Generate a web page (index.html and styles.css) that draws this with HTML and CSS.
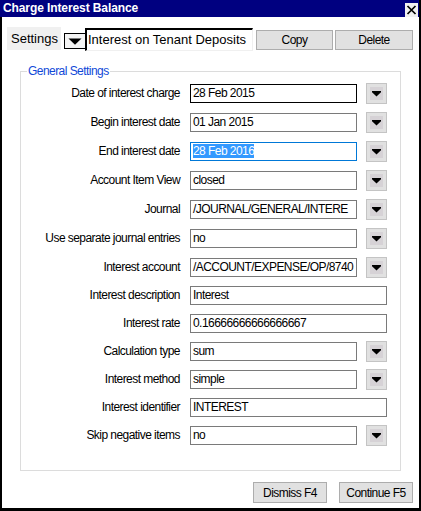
FILE: index.html
```html
<!DOCTYPE html>
<html>
<head>
<meta charset="utf-8">
<link rel="stylesheet" href="styles.css">
</head>
<body>
<div class="window">
  <div class="titlebar">
    <span class="title">Charge Interest Balance</span>
    <span class="close"><svg width="13" height="14" viewBox="0 0 13 14"><path d="M2.5 3 L10.5 11 M10.5 3 L2.5 11" stroke="#000" stroke-width="1.7" fill="none"/></svg></span>
  </div>
  <div class="content">
    <div class="settings-row">
      <span class="settings-label">Settings</span>
      <span class="settings-drop"><svg width="14" height="7" viewBox="0 0 14 7"><path d="M0.5 0.5 H13.5 L7 6.8 Z" fill="#000"/></svg></span>
      <span class="settings-field">Interest on Tenant Deposits</span>
      <button class="btn btn-top">Copy</button>
      <button class="btn btn-top btn-delete">Delete</button>
    </div>

    <div class="group">
      <span class="legend">General Settings</span>
      <div class="rows">
        <span class="lbl">Date of interest charge</span>
        <span class="inp inp-dark">28 Feb 2015</span>
        <span class="dd"><svg width="21" height="21" viewBox="0 0 21 21"><use href="#ddicon"/></svg></span>

        <span class="lbl">Begin interest date</span>
        <span class="inp">01 Jan 2015</span>
        <span class="dd"><svg width="21" height="21" viewBox="0 0 21 21"><use href="#ddicon"/></svg></span>

        <span class="lbl">End interest date</span>
        <span class="inp inp-focus"><span class="sel">28 Feb 2016</span></span>
        <span class="dd"><svg width="21" height="21" viewBox="0 0 21 21"><use href="#ddicon"/></svg></span>

        <span class="lbl">Account Item View</span>
        <span class="inp">closed</span>
        <span class="dd"><svg width="21" height="21" viewBox="0 0 21 21"><use href="#ddicon"/></svg></span>

        <span class="lbl">Journal</span>
        <span class="inp">/JOURNAL/GENERAL/INTERE</span>
        <span class="dd"><svg width="21" height="21" viewBox="0 0 21 21"><use href="#ddicon"/></svg></span>

        <span class="lbl">Use separate journal entries</span>
        <span class="inp">no</span>
        <span class="dd"><svg width="21" height="21" viewBox="0 0 21 21"><use href="#ddicon"/></svg></span>

        <span class="lbl">Interest account</span>
        <span class="inp">/ACCOUNT/EXPENSE/OP/8740</span>
        <span class="dd"><svg width="21" height="21" viewBox="0 0 21 21"><use href="#ddicon"/></svg></span>

        <span class="lbl">Interest description</span>
        <span class="inp inp-wide">Interest</span>

        <span class="lbl">Interest rate</span>
        <span class="inp inp-wide">0.16666666666666667</span>

        <span class="lbl">Calculation type</span>
        <span class="inp">sum</span>
        <span class="dd"><svg width="21" height="21" viewBox="0 0 21 21"><use href="#ddicon"/></svg></span>

        <span class="lbl">Interest method</span>
        <span class="inp">simple</span>
        <span class="dd"><svg width="21" height="21" viewBox="0 0 21 21"><use href="#ddicon"/></svg></span>

        <span class="lbl">Interest identifier</span>
        <span class="inp inp-wide">INTEREST</span>

        <span class="lbl">Skip negative items</span>
        <span class="inp">no</span>
        <span class="dd"><svg width="21" height="21" viewBox="0 0 21 21"><use href="#ddicon"/></svg></span>
      </div>
    </div>

    <div class="footer">
      <button class="btn btn-foot">Dismiss F4</button>
      <button class="btn btn-foot">Continue F5</button>
    </div>
  </div>
</div>

<svg width="0" height="0" class="defs">
  <defs>
    <g id="ddicon">
      <rect x="0.5" y="0.5" width="20" height="20" fill="#e1e1e1" stroke="#c4c4c4"/>
      <rect x="4" y="4" width="13" height="13" fill="#d6d2d6"/>
      <path d="M6 8 H15 V9.2 L10.5 13.6 L6 9.2 Z" fill="#000"/>
    </g>
  </defs>
</svg>
</body>
</html>
```

FILE: styles.css
```css
html, body {
  margin: 0;
  padding: 0;
  background: #000;
}

body {
  width: 421px;
  height: 511px;
  overflow: hidden;
  font-family: "Liberation Sans", Arial, sans-serif;
}

.defs {
  position: absolute;
  width: 0;
  height: 0;
}

.window {
  width: 421px;
  height: 511px;
  display: flex;
  flex-direction: column;
  background: #000;
}

.titlebar {
  width: 419px;
  height: 17px;
  box-sizing: border-box;
  background: #000080;
  display: flex;
  align-items: flex-start;
  justify-content: space-between;
  padding-right: 1px;
}

.title {
  color: #fff;
  font-weight: bold;
  font-size: 12px;
  line-height: 17px;
  padding-left: 3px;
  letter-spacing: -0.1px;
}

.close {
  margin-top: 3px;
  width: 13px;
  height: 14px;
  background: #f0f0f0;
  display: flex;
}

.content {
  flex: 1;
  margin: 0 2px 3px 2px;
  background: #fff;
  display: flex;
  flex-direction: column;
}

.settings-row {
  display: flex;
  align-items: flex-start;
  padding: 10px 0 0 5px;
}

.settings-label {
  width: 54px;
  height: 23px;
  box-sizing: border-box;
  background: #f0f0f0;
  font-size: 13px;
  line-height: 23px;
  padding-left: 4px;
}

.settings-drop {
  margin-left: 3px;
  margin-top: 6px;
  width: 21px;
  height: 16px;
  box-sizing: border-box;
  border-top: 1px solid #000;
  border-left: 1px solid #000;
  border-bottom: 1px solid #000;
  background: #f4f4f4;
  display: flex;
  align-items: center;
  justify-content: center;
}

.settings-field {
  margin-top: 1px;
  width: 168px;
  height: 23px;
  box-sizing: border-box;
  border-top: 2px solid #000;
  border-left: 2px solid #000;
  border-right: 1px solid #f0f0f0;
  border-bottom: 1px solid #f0f0f0;
  font-size: 13px;
  line-height: 20px;
  padding-left: 1px;
  white-space: nowrap;
  overflow: hidden;
}

.btn {
  font-family: "Liberation Sans", Arial, sans-serif;
  font-size: 12px;
  letter-spacing: -0.55px;
  color: #000;
  background: #e1e1e1;
  border: 1px solid #adadad;
  padding: 0;
  margin: 0;
  box-sizing: border-box;
}

.btn-top {
  margin-top: 3px;
  margin-left: 3px;
  width: 77px;
  height: 20px;
}

.btn-delete {
  margin-left: 2px;
  width: 78px;
}

.group {
  position: relative;
  margin: 20px 18px 0 18px;
  height: 400px;
  box-sizing: border-box;
  border: 1px solid #dcdcdc;
  padding: 12px 0 0 0;
}

.legend {
  position: absolute;
  top: -8px;
  left: 6px;
  background: #fff;
  padding: 0 1px;
  color: #1048d8;
  font-size: 12px;
  letter-spacing: -0.55px;
  line-height: 14px;
}

.rows {
  display: grid;
  grid-template-columns: 159px 10px 167px 9px 21px;
  grid-template-rows: repeat(6, 29px) repeat(7, 28px);
  align-items: start;
}

.lbl {
  grid-column: 1;
  text-align: right;
  font-size: 12px;
  letter-spacing: -0.55px;
  line-height: 19px;
  white-space: nowrap;
}

.inp {
  grid-column: 3;
  height: 19px;
  box-sizing: border-box;
  border: 1px solid #7a7a7a;
  padding: 0 2px;
  font-size: 12px;
  letter-spacing: -0.55px;
  line-height: 17px;
  white-space: nowrap;
  overflow: hidden;
}

.inp-wide {
  grid-column: 3 / 6;
}

.inp-dark {
  border-color: #000;
}

.inp-focus {
  border-color: #0078d7;
}

.sel {
  background: #3399ff;
  color: #fff;
}

.dd {
  grid-column: 5;
  margin-top: -1px;
  width: 21px;
  height: 21px;
  display: flex;
}

.footer {
  display: flex;
  justify-content: flex-end;
  gap: 12px;
  padding: 11px 6px 0 0;
}

.btn-foot {
  width: 74px;
  height: 21px;
}
```
